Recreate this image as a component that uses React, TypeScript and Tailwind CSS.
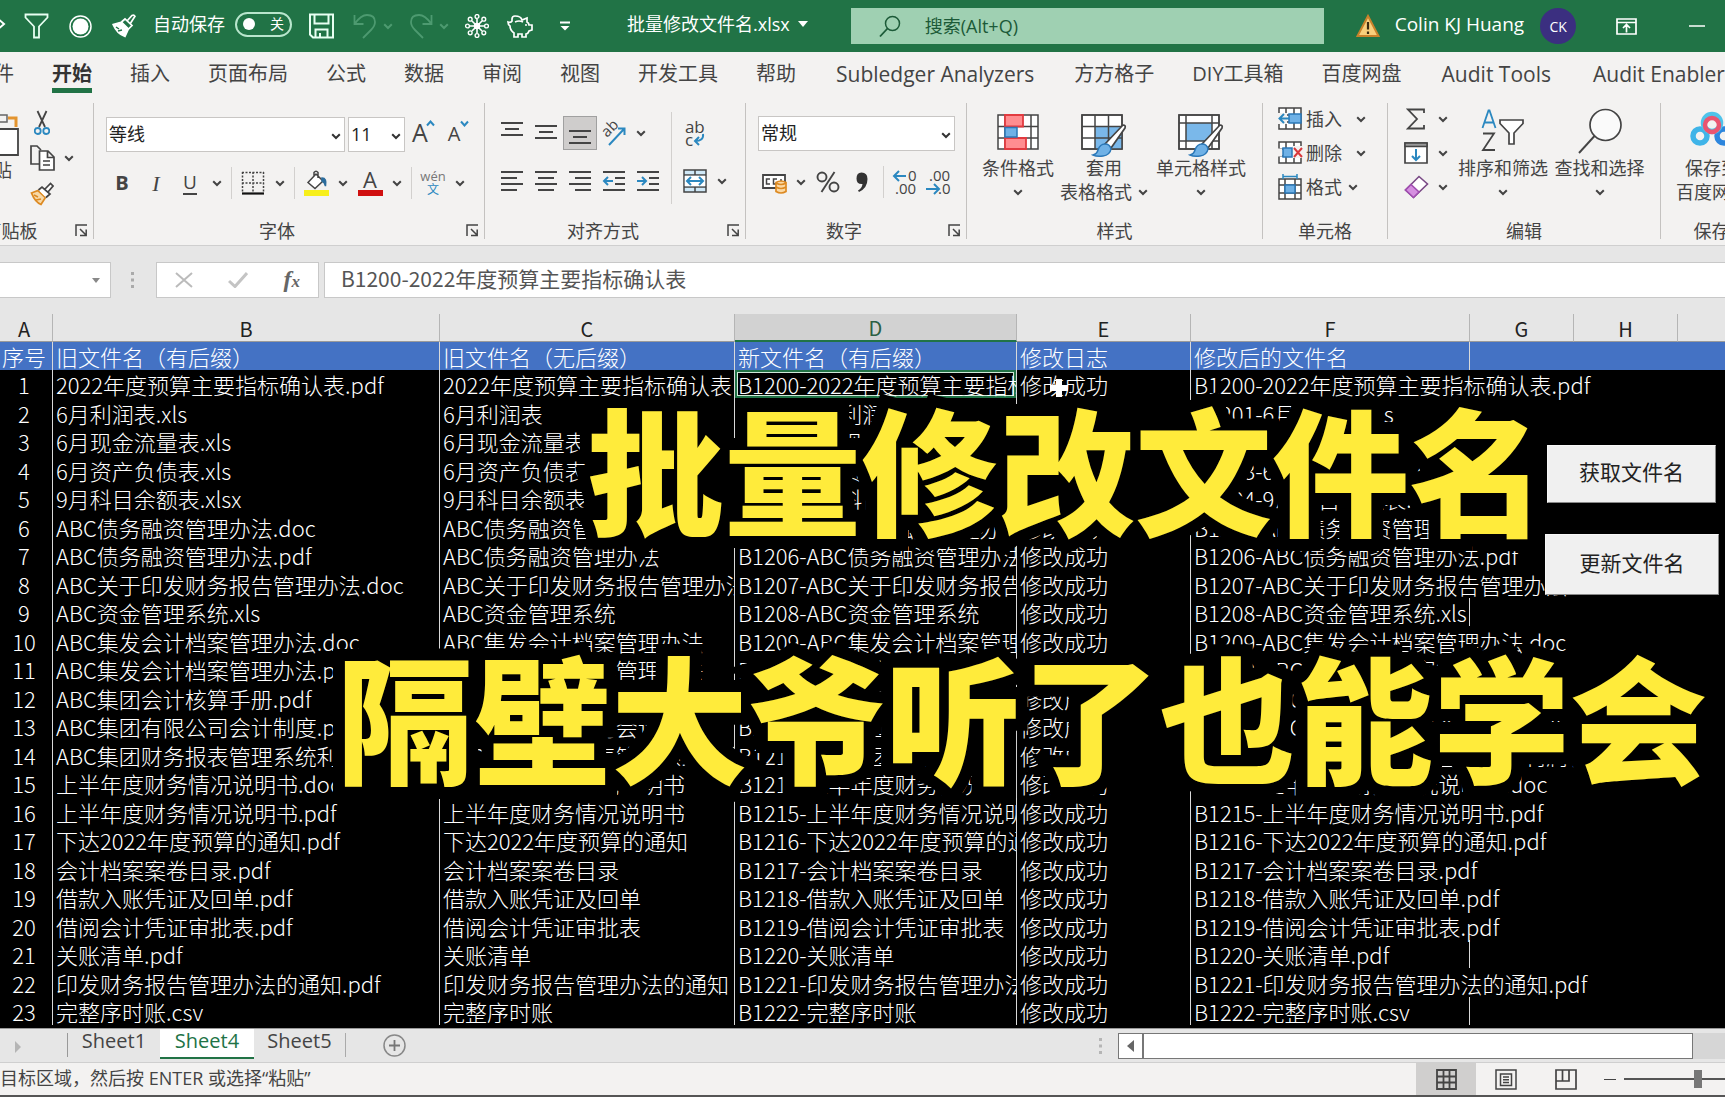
import React, { ReactNode } from "react";

const UI_FONT = "font-['Open_Sans','Noto_Sans_CJK_SC',sans-serif]";
const CELL_FONT = "font-['Noto_Sans_CJK_SC',sans-serif]";

type FileRow = { name: string; ext: string; spills?: boolean };

const FILES: FileRow[] = [
  { name: "2022年度预算主要指标确认表", ext: ".pdf", spills: true },
  { name: "6月利润表", ext: ".xls" },
  { name: "6月现金流量表", ext: ".xls" },
  { name: "6月资产负债表", ext: ".xls" },
  { name: "9月科目余额表", ext: ".xlsx" },
  { name: "ABC债务融资管理办法", ext: ".doc", spills: true },
  { name: "ABC债务融资管理办法", ext: ".pdf", spills: true },
  { name: "ABC关于印发财务报告管理办法", ext: ".doc", spills: true },
  { name: "ABC资金管理系统", ext: ".xls" },
  { name: "ABC集发会计档案管理办法", ext: ".doc", spills: true },
  { name: "ABC集发会计档案管理办法", ext: ".pdf", spills: true },
  { name: "ABC集团会计核算手册", ext: ".pdf", spills: true },
  { name: "ABC集团有限公司会计制度", ext: ".pdf", spills: true },
  { name: "ABC集团财务报表管理系统利润表", ext: ".xls", spills: true },
  { name: "上半年度财务情况说明书", ext: ".doc", spills: true },
  { name: "上半年度财务情况说明书", ext: ".pdf", spills: true },
  { name: "下达2022年度预算的通知", ext: ".pdf", spills: true },
  { name: "会计档案案卷目录", ext: ".pdf", spills: true },
  { name: "借款入账凭证及回单", ext: ".pdf", spills: true },
  { name: "借阅会计凭证审批表", ext: ".pdf", spills: true },
  { name: "关账清单", ext: ".pdf" },
  { name: "印发财务报告管理办法的通知", ext: ".pdf", spills: true },
  { name: "完整序时账", ext: ".csv" },
];

/* ---------- shared bits ---------- */

function Svg({ w = 24, h = 24, box, children, className = "" }: { w?: number; h?: number; box?: string; children: ReactNode; className?: string }) {
  return (
    <svg width={w} height={h} viewBox={box ?? `0 0 ${w} ${h}`} fill="none" stroke="#444" strokeWidth="1.5" className={`shrink-0 ${className}`} aria-hidden="true">
      {children}
    </svg>
  );
}

function Chevron({ className = "" }: { className?: string }) {
  return (
    <Svg w={10} h={7} className={className}>
      <path d="M1.2 1.2 5 5l3.8-3.8" strokeWidth="2" stroke="currentColor" />
    </Svg>
  );
}

function Tool({ label, children, active = false }: { label: string; children: ReactNode; active?: boolean }) {
  return (
    <button
      type="button"
      aria-label={label}
      className={`flex h-[34px] w-[34px] shrink-0 items-center justify-center ${active ? "border border-[#a0a0a0] bg-[#cfcdcc]" : ""}`}
    >
      {children}
    </button>
  );
}

function Drop({ label }: { label: string }) {
  return (
    <button type="button" aria-label={label} className="flex h-[34px] w-5 shrink-0 items-center justify-center text-[#444]">
      <Chevron />
    </button>
  );
}

function Rule() {
  return <span className="mx-1 h-8 w-px shrink-0 bg-[#d2d0ce]" />;
}

function Group({ label, width, launcher = false, children }: { label: string; width: string; launcher?: boolean; children: ReactNode }) {
  return (
    <section aria-label={label} className={`flex shrink-0 flex-col ${width}`}>
      <div className="flex flex-1">
        <div className="flex min-w-0 flex-1 flex-col">
          <div className="h-[114px]">{children}</div>
          <div className="flex h-[29px] items-center">
            <span className="flex-1 text-center text-[18px] leading-6">{label}</span>
            {launcher && (
              <button type="button" aria-label={`${label}设置`} className="flex w-6 justify-center">
                <Svg w={13} h={13}>
                  <path d="M1 12V1h11M5 5l6 6M11.2 5.500v6H5" />
                </Svg>
              </button>
            )}
          </div>
        </div>
        <span className="mt-px mb-1.5 w-px bg-[#c4c2c0]" />
      </div>
    </section>
  );
}

function BigButton({ lines, width, drop = "below", children }: { lines: string[]; width: string; drop?: "below" | "inline" | "none"; children: ReactNode }) {
  return (
    <button type="button" className={`flex shrink-0 flex-col items-center text-[18px] leading-6 ${width}`}>
      <span className="flex h-[54px] items-center">{children}</span>
      {lines.map((line, i) => (
        <span key={line} className="flex items-center gap-1.5 whitespace-nowrap">
          {line}
          {drop === "inline" && i === lines.length - 1 && <Chevron />}
        </span>
      ))}
      {drop === "below" && (
        <span className="flex h-6 items-center">
          <Chevron />
        </span>
      )}
    </button>
  );
}

/* ---------- title bar ---------- */

function TitleBar() {
  return (
    <header className="flex h-[52px] shrink-0 items-center overflow-hidden bg-[#217346] pb-1 text-[18px] whitespace-nowrap text-white">
      <Svg w={6} h={16} className="mr-[18px]">
        <path d="M-4 1 4 8l-8 7" stroke="#fff" strokeWidth="2" />
      </Svg>
      <button type="button" aria-label="筛选" className="mt-1 mr-5">
        <Svg w={25} h={26}>
          <path d="M1.500 1.500h22v3L15 13.500v11H10v-11L1.500 4.500z" stroke="#e8fff2" strokeWidth="1.800" />
        </Svg>
      </button>
      <button type="button" aria-label="录制" className="mt-1 mr-5">
        <Svg w={23} h={23}>
          <circle cx="11.500" cy="11.500" r="10.500" stroke="#fff" />
          <circle cx="11.500" cy="11.500" r="8" fill="#fff" stroke="none" />
        </Svg>
      </button>
      <button type="button" aria-label="格式刷" className="mt-1 mr-[17px]">
        <Svg w={24} h={24}>
          <path d="M1 10.500 9.500 8l7 7L13 22.500Q5 20 1 10.500z" fill="#fff" stroke="#fff" />
          <path d="M9.500 8 13 5l7 6.500-3.500 3.500M15 7l5-5.500q2-1 3 .8L18 10" stroke="#fff" strokeWidth="1.700" />
          <path d="m4 13 3 2m-1 2 4-1" stroke="#217346" />
        </Svg>
      </button>
      <label className="mr-[17px] flex items-center gap-2.5">
        <span>自动保存</span>
        <input type="checkbox" className="sr-only" />
        <span className="flex h-[25px] w-[57px] items-center justify-between rounded-full border-2 border-[#b9e6cd] px-1.5 text-[14px] leading-5">
          <span className="h-3 w-3 rounded-full bg-white" />
          关
        </span>
      </label>
      <button type="button" aria-label="保存" className="mt-1 mr-[19px]">
        <Svg w={25} h={26}>
          <path d="M1 1.500h23v23H4l-3-3zM5.500 1.500v9h14v-9M6.500 24.500v-8h12v8M11 20v4" stroke="#e8fff2" strokeWidth="2" />
        </Svg>
      </button>
      <button type="button" aria-label="撤消" className="mt-1 flex items-center gap-1.5 text-[#4d9a70]">
        <Svg w={24} h={26}>
          <path d="M1.500 2v9h9M2 10.500Q8 2 14 2q8 0 8 7 0 4-4 8l-8 8" stroke="currentColor" strokeWidth="1.800" />
        </Svg>
        <Chevron className="mr-4" />
      </button>
      <button type="button" aria-label="恢复" className="mt-1 flex items-center gap-1.5 text-[#4d9a70]">
        <Svg w={24} h={26}>
          <path d="M22.500 2v9h-9M22 10.500Q16 2 10 2 2 2 2 9q0 4 4 8l8 8" stroke="currentColor" strokeWidth="1.800" />
        </Svg>
        <Chevron className="mr-4" />
      </button>
      <button type="button" aria-label="雪花" className="mt-1 mr-[18px]">
        <Svg w={24} h={24}>
          <g stroke="#fff">
            <path d="M12 5v14M5 12h14M7 7l10 10M17 7 7 17" strokeWidth="1.600" />
            <circle cx="12" cy="12" r="2.500" fill="#fff" />
            {[[12, 2.500], [12, 21.500], [2.500, 12], [21.500, 12], [5.200, 5.200], [18.800, 5.200], [5.200, 18.800], [18.800, 18.800]].map(([x, y]) => (
              <circle key={`${x}-${y}`} cx={x} cy={y} r="1.900" strokeWidth="1.400" />
            ))}
          </g>
        </Svg>
      </button>
      <button type="button" aria-label="存钱罐" className="mt-1 mr-[26px]">
        <Svg w={26} h={24}>
          <path d="M5 5q0-3 3-3 6 0 7 4l5-2v4q2 1 2 3h3v5l-3 1q-1 3-3 3v3h-4v-3h-4v3H7v-4q-4-3-4-7Q1 11 1 8q3 1 4-1z" stroke="#fff" strokeWidth="1.700" />
          <path d="M8 8q4-2 8 0" stroke="#fff" />
          <circle cx="19" cy="11" r="1" fill="#fff" stroke="none" />
        </Svg>
      </button>
      <button type="button" aria-label="自定义快速访问工具栏" className="mt-1 mr-14">
        <Svg w={12} h={12}>
          <path d="M1 2.500h10" stroke="#fff" strokeWidth="2" />
          <path d="m1.500 6 4.500 4.500L10.500 6z" fill="#fff" stroke="none" />
        </Svg>
      </button>
      <button type="button" className="mr-[43px] flex items-center gap-2">
        批量修改文件名.xlsx
        <Svg w={10} h={6}>
          <path d="M0 0h10L5 6z" fill="#fff" stroke="none" />
        </Svg>
      </button>
      <label className="mt-1 flex h-9 w-[473px] shrink-0 items-center gap-6 bg-[#9fd0b2] pl-7">
        <Svg w={22} h={23}>
          <circle cx="13.500" cy="8.500" r="7" stroke="#1c5a38" />
          <path d="M8.500 13.500 1 21.500" stroke="#1c5a38" strokeWidth="1.800" />
        </Svg>
        <input type="search" aria-label="搜索" placeholder="搜索(Alt+Q)" className="min-w-0 flex-1 bg-transparent text-[18px] text-[#1c5a38] outline-none placeholder:text-[#1c5a38]" />
      </label>
      <Svg w={24} h={24} className="mt-1 mr-[15px] ml-8">
        <path d="M12 2 22.500 22h-21z" fill="#f8cf7c" stroke="#c9822b" strokeWidth="2" />
        <path d="M12 8v7.500M12 17.500v2.500" stroke="#3a2a10" strokeWidth="2.200" />
      </Svg>
      <span className="mr-4 text-[19px]">Colin KJ Huang</span>
      <button type="button" aria-label="账户" className="mt-1 mr-10 flex h-9 w-9 shrink-0 items-center justify-center rounded-full bg-[#3b2f80] text-[14px]">
        CK
      </button>
      <button type="button" aria-label="功能区显示选项" className="mt-1 mr-[52px]">
        <Svg w={21} h={17}>
          <path d="M1 1h19v15H1zM1 4.500h19M10.500 14.500V7M7 10l3.500-3.500L14 10" stroke="#fff" strokeWidth="1.700" />
        </Svg>
      </button>
      <button type="button" aria-label="最小化" className="mt-1">
        <Svg w={16} h={4}>
          <path d="M0 2h16" stroke="#fff" />
        </Svg>
      </button>
    </header>
  );
}

/* ---------- ribbon tabs ---------- */

const TABS = ["文件", "开始", "插入", "页面布局", "公式", "数据", "审阅", "视图", "开发工具", "帮助", "Subledger Analyzers", "方方格子", "DIY工具箱", "百度网盘", "Audit Tools", "Audit Enablers"];

function RibbonTabs() {
  return (
    <nav className="h-[50px] shrink-0 overflow-hidden bg-[#f3f2f1]">
      <div className="-ml-[26px] flex gap-[38px] text-[20px] leading-7 whitespace-nowrap text-[#444]">
        {TABS.map((t) => (
          <button
            key={t}
            type="button"
            className={`mt-2 border-b-[5px] ${t === "开始" ? "border-[#217346] font-bold text-[#333]" : "border-transparent"} ${/^(Sub|Audit)/.test(t) ? "px-0.5 text-[21px]" : ""}`}
          >
            {t}
          </button>
        ))}
      </div>
    </nav>
  );
}

/* ---------- ribbon groups ---------- */

function Lines({ rows }: { rows: [number, number, number][] }) {
  return (
    <Svg w={24} h={24}>
      <path d={rows.map(([x1, x2, y]) => `M${x1} ${y}H${x2}`).join("")} strokeWidth="2" />
    </Svg>
  );
}

function Combo({ label, value, width }: { label: string; value: string; width: string }) {
  return (
    <span className={`relative flex h-[35px] shrink-0 ${width}`}>
      <select aria-label={label} className="w-full appearance-none border border-[#c8c6c4] bg-white pl-0.5 text-[18px] text-[#222]">
        <option>{value}</option>
      </select>
      <Chevron className="pointer-events-none absolute top-4 right-1 text-[#333]" />
    </span>
  );
}

function ClipboardGroup() {
  return (
    <Group label="剪贴板" width="w-[142px] -ml-12" launcher>
      <div className="flex pl-6">
        <button type="button" className="w-11 self-start text-left text-[18px] leading-6">
          <span className="flex h-14 items-center justify-end">
            <Svg w={44} h={44} className="mt-2">
              <path d="M6 6h12M32 6h8v9" stroke="#e3942f" strokeWidth="3" />
              <path d="M18 3h13v7H18z" fill="#f3f2f1" stroke="#666" />
              <path d="M16 17h26v26H16z" fill="#fff" strokeWidth="1.800" />
            </Svg>
          </span>
          粘贴
        </button>
        <div className="flex flex-col pl-2.5">
          <button type="button" aria-label="剪切" className="flex h-[38px] w-6 items-center justify-center pt-1">
            <Svg w={16} h={26}>
              <path d="M3.500 1 11 17M12.500 1 5 17" strokeWidth="1.800" />
              <circle cx="3.700" cy="21" r="3" stroke="#2b88c0" strokeWidth="1.800" />
              <circle cx="12.300" cy="21" r="3" stroke="#2b88c0" strokeWidth="1.800" />
            </Svg>
          </button>
          <div className="flex h-9 items-center">
            <button type="button" aria-label="复制" className="mr-1">
              <Svg w={25} h={26}>
                <path d="M9 19H1V1h6l4 4" strokeWidth="1.700" />
                <path d="M9.500 6h8.500l6 6v13H9.500zM17.500 6v6.500H24M13 16h7M13 20h7" strokeWidth="1.700" fill="#fff" />
              </Svg>
            </button>
            <Drop label="复制选项" />
          </div>
          <button type="button" aria-label="格式刷" className="flex h-9 w-6 items-center">
            <Svg w={24} h={24}>
              <path d="M1.500 11 8 8.500l7.500 7L11 22.500Q5 20 1.500 11z" fill="#f7d9a8" stroke="#dd8a22" strokeWidth="1.800" />
              <path d="m4 13 4 2m-2 3 5-1" stroke="#dd8a22" />
              <path d="m8.500 8 3.500-3 8 7-4 3.500M15 7l5.500-5.500L23 4l-5 6" fill="#fff" strokeWidth="1.700" />
            </Svg>
          </button>
        </div>
      </div>
    </Group>
  );
}

function FontGroup() {
  return (
    <Group label="字体" width="w-[391px]" launcher>
      <div className="flex items-center gap-[3px] pt-3.5 pl-3">
        <Combo label="字体" value="等线" width="w-[239px]" />
        <Combo label="字号" value="11" width="w-[57px]" />
        <button type="button" aria-label="增大字号" className="ml-1 flex items-start pb-1">
          <span className="text-[25px] leading-8">A</span>
          <Svg w={9} h={7} className="mt-1 -ml-0.5">
            <path d="m1 5.500 3.500-4L8 5.500" stroke="#2b88c0" strokeWidth="2" />
          </Svg>
        </button>
        <button type="button" aria-label="减小字号" className="ml-2.5 flex items-start">
          <span className="text-[20px] leading-7">A</span>
          <Svg w={9} h={7}>
            <path d="m1 1.500 3.500 4L8 1.500" stroke="#2b88c0" strokeWidth="2" />
          </Svg>
        </button>
      </div>
      <div className="flex items-center pt-3.5 pl-[11px]">
        <Tool label="加粗"><span className="text-[20px] font-bold">B</span></Tool>
        <Tool label="倾斜"><span className="font-['Liberation_Serif',serif] text-[22px] italic">I</span></Tool>
        <Tool label="下划线"><span className="border-b-2 border-[#444] text-[19px] leading-[22px]">U</span></Tool>
        <Drop label="下划线选项" />
        <Rule />
        <Tool label="边框">
          <Svg w={24} h={24}>
            <path d="M1 1.500h22M1 12h22M1.500 1v21M12 1v21M22.500 1v21" strokeDasharray="2 1.500" />
            <path d="M1 22.500h22" stroke="#111" strokeWidth="2.200" />
          </Svg>
        </Tool>
        <Drop label="边框选项" />
        <Rule />
        <Tool label="填充颜色">
          <Svg w={25} h={26}>
            <path d="M4 12.500 12 4l7 7-8 7.500zM10 6V2.500Q12 0 14 2.500V8" fill="#fff" />
            <path d="M18 8q5 0 3.500 8-1-4-3.500-5z" fill="#2b6c9c" stroke="#2b6c9c" />
            <path d="M0 20h25v6H0z" fill="#f7ef1b" stroke="none" />
          </Svg>
        </Tool>
        <Drop label="填充颜色选项" />
        <Tool label="字体颜色">
          <span className="flex h-[26px] w-[25px] flex-col items-center justify-end border-b-[6px] border-[#d01010] text-[22px] leading-[22px]">A</span>
        </Tool>
        <Drop label="字体颜色选项" />
        <Rule />
        <Tool label="拼音">
          <span className="flex flex-col items-center text-[13px] leading-[13px] text-[#777]">
            wén<span className="text-[12px] text-[#2b88c0]">文</span>
          </span>
        </Tool>
        <Drop label="拼音选项" />
      </div>
    </Group>
  );
}

function AlignGroup() {
  return (
    <Group label="对齐方式" width="w-[261px]" launcher>
      <div className="flex pl-2.5">
        <div>
          <div className="flex pt-3.5">
            <Tool label="顶端对齐"><Lines rows={[[1, 23, 2], [5, 19, 8], [1, 23, 14]]} /></Tool>
            <Tool label="垂直居中"><Lines rows={[[1, 23, 5], [5, 19, 11], [1, 23, 17]]} /></Tool>
            <Tool label="底端对齐" active><Lines rows={[[1, 23, 10], [5, 19, 16], [1, 23, 22]]} /></Tool>
            <Tool label="方向">
              <Svg w={26} h={26}>
                <path d="m8 25 15-16M17 8.500h6.500V15" stroke="#2b88c0" strokeWidth="2" />
                <text x="0" y="0" transform="translate(6 18) rotate(-45)" fontSize="15" fill="#444" stroke="none">ab</text>
              </Svg>
            </Tool>
            <Drop label="方向选项" />
          </div>
          <div className="flex pt-3.5">
            <Tool label="左对齐"><Lines rows={[[1, 23, 3], [1, 17, 9], [1, 23, 15], [1, 17, 21]]} /></Tool>
            <Tool label="居中"><Lines rows={[[1, 23, 3], [4, 20, 9], [1, 23, 15], [4, 20, 21]]} /></Tool>
            <Tool label="右对齐"><Lines rows={[[1, 23, 3], [7, 23, 9], [1, 23, 15], [7, 23, 21]]} /></Tool>
            <Tool label="减少缩进量">
              <Svg>
                <path d="M1 3h22M13 9h10M13 15h10M1 21h22" strokeWidth="2" />
                <path d="M11 12H2m4-4-4 4 4 4" stroke="#2b88c0" strokeWidth="2" />
              </Svg>
            </Tool>
            <Tool label="增加缩进量">
              <Svg>
                <path d="M1 3h22M13 9h10M13 15h10M1 21h22" strokeWidth="2" />
                <path d="M1 12h9M6 8l4 4-4 4" stroke="#2b88c0" strokeWidth="2" />
              </Svg>
            </Tool>
          </div>
        </div>
        <span className="mx-1.5 mt-2.5 h-[92px] w-px bg-[#d2d0ce]" />
        <div>
          <div className="flex pt-3.5">
            <Tool label="自动换行">
              <span className="text-left text-[17px] leading-[13px]">
                ab
                <span className="flex items-center">
                  c
                  <Svg w={12} h={14}>
                    <path d="M10 1q1 7-8 7m4-4L2 8l4 4" stroke="#2b88c0" strokeWidth="2" />
                  </Svg>
                </span>
              </span>
            </Tool>
          </div>
          <div className="flex pt-3.5">
            <Tool label="合并后居中">
              <Svg>
                <path d="M1 1h22v22H1z" fill="#cfe8f7" />
                <path d="M1 6h22M1 18h22M12 1v5M12 18v5" />
                <path d="M1.800 6.800h20.400v10.400H1.800z" fill="#fff" stroke="none" />
                <path d="M4 12h16M8 8l-4 4 4 4M16 8l4 4-4 4" stroke="#2b88c0" strokeWidth="2" />
              </Svg>
            </Tool>
            <Drop label="合并选项" />
          </div>
        </div>
      </div>
    </Group>
  );
}

function DecimalIcon({ increase }: { increase: boolean }) {
  return (
    <Svg w={26} h={26}>
      <g fontSize="15" fill="#444" stroke="none">
        <text x={increase ? 16 : 3} y="12">{increase ? "0" : ".00"}</text>
        <text x={increase ? 3 : 12} y="25">{increase ? ".00" : ".0"}</text>
      </g>
      {increase ? <path d="M14 7H2m5-5L2 7l5 5" stroke="#2b88c0" strokeWidth="2" /> : <path d="M0 20h12M8 15l5 5-5 5" stroke="#2b88c0" strokeWidth="2" />}
    </Svg>
  );
}

function NumberGroup() {
  return (
    <Group label="数字" width="w-[221px]" launcher>
      <div className="pt-3.5 pl-3">
        <Combo label="数字格式" value="常规" width="w-[197px]" />
      </div>
      <div className="flex items-center pt-3.5 pl-[11px]">
        <Tool label="会计数字格式">
          <Svg w={25} h={24}>
            <path d="M1 5h22v13H1z" fill="#fff" strokeWidth="1.800" />
            <path d="M8 9H4.500v5H8M15 9h-3.500v5H15M19 9v3" />
            <path d="M14 12.500q5-3 10 0v9q-5 3-10 0z" fill="#fbd9a5" stroke="#dd8a22" strokeWidth="1.700" />
            <path d="M14 13q5 3 10 0M14 17q5 3 10 0" stroke="#dd8a22" />
          </Svg>
        </Tool>
        <Drop label="会计数字格式选项" />
        <Tool label="百分比样式">
          <Svg w={24} h={24}>
            <circle cx="6" cy="7" r="4.500" strokeWidth="1.900" />
            <circle cx="18" cy="17" r="4.500" strokeWidth="1.900" />
            <path d="M18.500 2 5.500 22" strokeWidth="1.900" />
          </Svg>
        </Tool>
        <Tool label="千位分隔样式">
          <Svg w={12} h={20}>
            <path d="M5.500.5q6 0 6 6.500 0 9-8.500 13l-1-1.500q4-2.500 4.500-6.500Q.5 12.500.5 6.500.5.5 5.500.5z" fill="#333" stroke="none" />
          </Svg>
        </Tool>
        <Rule />
        <Tool label="增加小数位数"><DecimalIcon increase /></Tool>
        <Tool label="减少小数位数"><DecimalIcon increase={false} /></Tool>
      </div>
    </Group>
  );
}

function BrushOverlay() {
  return (
    <>
      <path d="M42 11q3 0 2 3L30 34l-6-4z" fill="#fff" strokeWidth="1.700" />
      <path d="M24 30q5 0 6 5-1 6-8 7-6 1-10-1 4-1 5-5 2-6 7-6z" fill="#6fb1e6" stroke="#2b78b8" />
    </>
  );
}

function StylesGroup() {
  return (
    <Group label="样式" width="w-[296px]">
      <div className="flex pl-2">
        <BigButton lines={["条件格式"]} width="w-[86px]">
          <Svg w={42} h={36} className="mt-1.5">
            <path d="M1 1h40v34H1z" fill="#fff" />
            <path d="M8 1v34M34 1v34M1 12.500h40M1 24h40" />
            <path d="M8 1h18v11.500H8zM8 24h21v11H8z" fill="#ff8d90" stroke="#e23b40" strokeWidth="1.800" />
            <path d="M8 13.500h12V23H8z" fill="#6fb1e6" stroke="#2b78b8" />
          </Svg>
        </BigButton>
        <BigButton lines={["套用", "表格格式"]} width="w-[86px]" drop="inline">
          <Svg w={46} h={44} className="mt-3.5">
            <path d="M1 1h40v34H1z" fill="#fff" />
            <path d="M14 12.500h27V35H14z" fill="#7ab8ea" stroke="none" />
            <path d="M1 1h40v34H1zM14 1v34M27.500 1v34M1 12.500h40M1 24h40" />
            <BrushOverlay />
          </Svg>
        </BigButton>
        <BigButton lines={["单元格样式"]} width="w-[100px] ml-1">
          <Svg w={46} h={44} className="mt-3.5">
            <path d="M1 1h40v34H1z" fill="#fff" />
            <path d="M8 9h26v18H8z" fill="#7ab8ea" stroke="none" />
            <path d="M1 1h40v34H1zM8 1v34M34 1v34M1 9h40M1 27h40" />
            <BrushOverlay />
          </Svg>
        </BigButton>
      </div>
    </Group>
  );
}

function CellsGroup() {
  const base = <path d="M1 1h22v21H1zM8 1v21M16 1v21M1 8h22M1 15h22" fill="#fff" />;
  return (
    <Group label="单元格" width="w-[125px]">
      <div className="pl-[15px] text-[18px]">
        <button type="button" className="flex h-[34px] items-center whitespace-nowrap">
          <Svg w={25} h={24}>
            {base}
            <path d="M11 7h12v9H11z" fill="#6fb1e6" stroke="#2b78b8" />
            <path d="M0 6h9v11H0z" fill="#f3f2f1" stroke="none" />
            <path d="M11 11.500H1.500M6 7l-4.500 4.500L6 16" stroke="#2b88c0" strokeWidth="2" />
          </Svg>
          <span className="mr-3.5 ml-[3px]">插入</span>
          <Chevron />
        </button>
        <button type="button" className="flex h-[34px] items-center whitespace-nowrap">
          <Svg w={25} h={24}>
            {base}
            <path d="M0 7.500h4v8H0zM14 5h11v12H14z" fill="#f3f2f1" stroke="none" />
            <path d="M5 7h9v9H5z" fill="#6fb1e6" stroke="#2b78b8" />
            <path d="m16 7 8 9M24 7l-8 9" stroke="#d9383c" strokeWidth="2" />
          </Svg>
          <span className="mr-3.5 ml-[3px]">删除</span>
          <Chevron />
        </button>
        <button type="button" className="flex h-[34px] items-center whitespace-nowrap">
          <Svg w={25} h={26}>
            <path d="M1 5h22v20H1zM7 5v20M17 5v20M1 11h22M1 19h22" fill="#fff" />
            <path d="M7 11h10v8H7z" fill="#6fb1e6" stroke="#2b78b8" />
            <path d="M5 2.500h14M5 0v5M19 0v5" stroke="#2b88c0" />
          </Svg>
          <span className="mr-1.5 ml-[3px]">格式</span>
          <Chevron />
        </button>
      </div>
    </Group>
  );
}

function EditGroup() {
  return (
    <Group label="编辑" width="w-[273px]">
      <div className="flex pl-[11px]">
        <div>
          <div className="flex">
            <Tool label="自动求和">
              <Svg w={20} h={22}>
                <path d="M18 5V1.500H2L11 11l-9 9.500h16V17" strokeWidth="1.800" />
              </Svg>
            </Tool>
            <Drop label="求和选项" />
          </div>
          <div className="flex">
            <Tool label="填充">
              <Svg w={25} h={22}>
                <path d="M1 1h22v20H1z" fill="#fff" strokeWidth="1.700" />
                <path d="M1 1h22v3.500H1z" fill="#999" />
                <path d="M12 7v11m-4-4 4 4 4-4" stroke="#2b88c0" strokeWidth="2" />
              </Svg>
            </Tool>
            <Drop label="填充选项" />
          </div>
          <div className="flex">
            <Tool label="清除">
              <Svg w={25} h={24}>
                <path d="M15 1.500 23.500 9 9.500 22.500 1.500 15z" fill="#fff" stroke="#7a4a86" strokeWidth="1.600" />
                <path d="m7 9.500 8 7.500-5.500 5.500-8-7.500z" fill="#d58fe0" stroke="#a04db0" strokeWidth="1.600" />
              </Svg>
            </Tool>
            <Drop label="清除选项" />
          </div>
        </div>
        <BigButton lines={["排序和筛选"]} width="w-[96px] ml-0.5">
          <Svg w={44} h={46} className="mt-1">
            <path d="m1.500 20 6-17.500h1l6 17.500M4 14.500h8" stroke="#2b88c0" strokeWidth="1.800" />
            <path d="M2 25.500h11L2 42h12" strokeWidth="1.800" />
            <path d="M19 12h23v3.500L33 25v11h-5V25l-9-9.500z" fill="#fff" strokeWidth="1.700" />
          </Svg>
        </BigButton>
        <BigButton lines={["查找和选择"]} width="w-[97px]">
          <Svg w={44} h={46} className="mt-1">
            <circle cx="27.500" cy="17" r="15.500" fill="#fafafa" strokeWidth="1.700" />
            <path d="M16.500 28 1 45" strokeWidth="1.900" />
          </Svg>
        </BigButton>
      </div>
    </Group>
  );
}

function BaiduGroup() {
  return (
    <Group label="保存" width="w-[102px]">
      <div className="flex">
        <BigButton lines={["保存到", "百度网盘"]} width="w-[102px]" drop="none">
          <Svg w={44} h={36}>
            <circle cx="10" cy="25" r="7" stroke="#3fb4e8" strokeWidth="5.500" />
            <circle cx="34" cy="25" r="7" stroke="#2d86dd" strokeWidth="5.500" />
            <circle cx="22" cy="12" r="8.500" stroke="#4fc3ea" strokeWidth="5.500" />
            <circle cx="22" cy="14" r="7" stroke="#ea5470" strokeWidth="4.500" />
          </Svg>
        </BigButton>
      </div>
    </Group>
  );
}

/* ---------- formula bar ---------- */

function FormulaBar() {
  return (
    <div className="flex h-9 shrink-0 items-stretch">
      <button type="button" aria-label="名称框" className="flex w-[111px] shrink-0 items-center justify-end border border-l-0 border-[#c8c8c8] bg-white pr-2.5">
        <Svg w={8} h={5}>
          <path d="M0 0h8L4 5z" fill="#888" stroke="none" />
        </Svg>
      </button>
      <Svg w={45} h={36}>
        <path d="M21.500 10v16" stroke="#aaa" strokeWidth="3" strokeDasharray="3 3.500" />
      </Svg>
      <div className="flex w-[163px] shrink-0 items-center justify-between border border-[#c8c8c8] bg-white px-[18px]">
        <button type="button" aria-label="取消">
          <Svg w={18} h={16}>
            <path d="m1 1 16 14M17 1 1 15" stroke="#bbb" strokeWidth="2" />
          </Svg>
        </button>
        <button type="button" aria-label="输入">
          <Svg w={20} h={16}>
            <path d="m1 9 6 5.500L19 1" stroke="#c4c4c4" strokeWidth="3" />
          </Svg>
        </button>
        <button type="button" aria-label="插入函数" className="font-['Liberation_Serif',serif] text-[24px] leading-7 font-bold text-[#666] italic">
          f<span className="text-[17px]">x</span>
        </button>
      </div>
      <input
        aria-label="编辑栏"
        defaultValue="B1200-2022年度预算主要指标确认表"
        className={`ml-[5px] min-w-0 flex-1 border border-r-0 border-[#c8c8c8] bg-white pb-0.5 pl-4 text-[21px] text-[#555] outline-none ${CELL_FONT}`}
      />
    </div>
  );
}

/* ---------- sheet ---------- */

const COLUMNS = ["A", "B", "C", "D", "E", "F", "G", "H", ""];
const TITLES = ["序号", "旧文件名（有后缀）", "旧文件名（无后缀）", "新文件名（有后缀）", "修改日志", "修改后的文件名", "", "", ""];

function Sheet() {
  const line = "border-r border-[#d9d9d9]";
  return (
    <main className={`relative min-h-0 flex-1 overflow-hidden border-b border-[#999] ${CELL_FONT}`}>
      <div className="h-full overflow-hidden bg-[#e6e6e6] pt-4">
        <div className="h-full bg-black">
          <table className="w-full table-fixed border-separate border-spacing-0 text-[22px] leading-7 font-light whitespace-nowrap text-white">
            <colgroup>
              <col className="w-[53px]" />
              <col className="w-[387px]" />
              <col className="w-[295px]" />
              <col className="w-[282px]" />
              <col className="w-[174px]" />
              <col className="w-[279px]" />
              <col className="w-[104px]" />
              <col className="w-[104px]" />
              <col />
            </colgroup>
            <thead>
              <tr className="h-7 text-[20px] text-[#222]">
                {COLUMNS.map((c, i) => (
                  <th
                    key={i}
                    scope="col"
                    className={`overflow-hidden border-r p-0 pt-0.5 leading-6 font-normal ${i === 0 ? "pr-1" : ""} ${i === 8 ? "border-r-0" : "border-r-[#b5b5b5]"} ${c === "D" ? "border-b-2 border-b-[#217346] bg-[#d2d2d2] text-[#2c5f43]" : "border-b border-b-[#9a9a9a] bg-[#e6e6e6]"}`}
                  >
                    {c}
                  </th>
                ))}
              </tr>
            </thead>
            <tbody>
              <tr className="h-7 bg-[#4472c4]">
                {TITLES.map((t, i) => (
                  <td key={i} className={`overflow-hidden p-0 ${i === 0 ? "pr-1 text-center" : "pl-[3px]"} ${i < 6 ? line : ""}`}>
                    {t}
                  </td>
                ))}
              </tr>
              {FILES.map((f, i) => {
                const renamed = `B${1200 + i}-${f.name}`;
                return (
                  <tr key={i} className="h-7 odd:h-[29px]">
                    <td className={`p-0 pr-1 text-center ${line}`}>{i + 1}</td>
                    <td className={`overflow-hidden p-0 pl-[3px] ${line}`}>{f.name + f.ext}</td>
                    <td className={`overflow-hidden p-0 pl-[3px] ${line}`}>{f.name}</td>
                    <td className={`overflow-hidden p-0 pl-[3px] ${i === 0 ? "shadow-[inset_0_0_0_2px_#217346,inset_0_0_0_3px_#cfe8d8]" : ""} ${line}`}>{renamed}</td>
                    <td className={`overflow-hidden p-0 pl-[3px] ${line}`}>修改成功</td>
                    <td className={`p-0 pl-[3px] ${f.spills ? "" : line}`}>
                      <span className="block w-0">{renamed + f.ext}</span>
                    </td>
                    <td className="p-0" />
                    <td className="p-0" />
                    <td className="p-0" />
                  </tr>
                );
              })}
            </tbody>
          </table>
        </div>
      </div>

      <Svg w={18} h={18} className="absolute top-[81px] left-[1050px]">
        <path d="M9 0v18M0 9h18" stroke="#fff" strokeWidth="6" />
      </Svg>

      <button type="button" className="absolute top-[147px] left-[1547px] h-[58px] w-[169px] border border-[#f8f8f8] border-r-[#888] border-b-[#888] bg-[#f0f0f0] pb-1 text-[21px] text-[#222]">
        获取文件名
      </button>
      <button type="button" className="absolute top-[236px] left-[1545px] h-[61px] w-[174px] border border-[#f8f8f8] border-r-[#888] border-b-[#888] bg-[#f0f0f0] pb-1 text-[21px] text-[#222]">
        更新文件名
      </button>

      <h1 className="pointer-events-none text-[137px] leading-[140px] font-black whitespace-nowrap text-[#ffeb3b] [-webkit-text-stroke:24px_#000] [paint-order:stroke_fill]">
        <span className="absolute top-[98px] left-[587px]">批量修改文件名</span>
        <span className="absolute top-[346px] left-[337px]">隔壁大爷听了也能学会</span>
      </h1>
    </main>
  );
}

/* ---------- bottom bars ---------- */

function SheetTabs() {
  return (
    <div className="flex h-[34px] shrink-0 items-start overflow-hidden border-b border-[#cfcfcf] bg-[#e6e6e6] text-[20px] leading-6 text-[#444]">
      <button type="button" aria-label="下一个工作表" className="mt-3 mr-[46px] ml-[15px]">
        <Svg w={6} h={12}>
          <path d="M0 0v12l6-6z" fill="#b5b5b5" stroke="none" />
        </Svg>
      </button>
      <span className="mt-1 h-6 w-px bg-[#999]" />
      <button type="button" className="w-[92px] text-center">Sheet1</button>
      <button type="button" className="flex h-[30px] w-[94px] items-start justify-center border-b-2 border-[#217346] bg-white text-[#217346]">Sheet4</button>
      <button type="button" className="w-[91px] text-center">Sheet5</button>
      <span className="mt-1 h-6 w-px bg-[#aaa]" />
      <button type="button" aria-label="新工作表" className="mt-[5px] ml-[37px]">
        <Svg w={23} h={23}>
          <circle cx="11.500" cy="11.500" r="10.500" stroke="#888" />
          <path d="M11.500 6v11M6 11.500h11" stroke="#777" strokeWidth="1.800" />
        </Svg>
      </button>
      <Svg w={19} h={34} className="ml-auto">
        <path d="M1.500 9v17" stroke="#b5b5b5" strokeWidth="3" strokeDasharray="3 3.500" />
      </Svg>
      <div className="mt-1 flex h-[26px] w-[575px] border border-[#777] bg-white">
        <button type="button" aria-label="向左滚动" className="flex w-[25px] items-center justify-center border-r-2 border-[#777]">
          <Svg w={7} h={12}>
            <path d="M7 0v12L0 6z" fill="#666" stroke="none" />
          </Svg>
        </button>
      </div>
      <span className="mt-1 h-[26px] w-8 bg-[#d6d6d6]" />
    </div>
  );
}

function StatusBar() {
  return (
    <footer className="flex h-[34px] shrink-0 items-stretch overflow-hidden border-b-2 border-[#555] bg-[#f3f2f1] text-[18px] text-[#444]">
      <p className="mr-auto self-center pb-0.5 leading-7 whitespace-nowrap">目标区域，然后按 ENTER 或选择“粘贴”</p>
      <button type="button" aria-label="普通" className="flex w-[60px] items-center justify-center bg-[#d0cfce]">
        <Svg w={21} h={21}>
          <path d="M1 1h19v19H1zM7.500 1v19M13.500 1v19M1 7.500h19M1 13.500h19" strokeWidth="1.800" />
        </Svg>
      </button>
      <button type="button" aria-label="页面布局" className="flex w-[60px] items-center justify-center">
        <Svg w={22} h={21}>
          <path d="M1 1h20v19H1zM5.500 5h11v11.500h-11zM8 8h6M8 10.800h6M8 13.500h6" />
        </Svg>
      </button>
      <button type="button" aria-label="分页预览" className="flex w-[60px] items-center justify-center">
        <Svg w={22} h={21}>
          <path d="M1 1h20v19H1zM1 12h13V1M7.500 1v11" strokeWidth="1.700" />
        </Svg>
      </button>
      <button type="button" aria-label="缩小" className="mr-2 ml-2 flex w-3 items-center">
        <span className="h-px w-3 bg-[#444]" />
      </button>
      <div className="flex w-[101px] items-center overflow-hidden">
        <input
          type="range"
          aria-label="显示比例"
          defaultValue={50}
          className="h-[18px] w-[148px] shrink-0 appearance-none bg-[linear-gradient(#555,#555)] bg-[length:100%_2px] bg-center bg-no-repeat [&::-webkit-slider-thumb]:h-[18px] [&::-webkit-slider-thumb]:w-2 [&::-webkit-slider-thumb]:appearance-none [&::-webkit-slider-thumb]:bg-[#777]"
        />
      </div>
    </footer>
  );
}

export default function App() {
  return (
    <div className={`flex h-screen min-h-[720px] flex-col overflow-hidden bg-[#e6e6e6] text-[#444] ${UI_FONT}`}>
      <TitleBar />
      <RibbonTabs />
      <div className="mb-4 flex shrink-0 overflow-hidden border-b border-[#cfcfcf] bg-[#f3f2f1]">
        <ClipboardGroup />
        <FontGroup />
        <AlignGroup />
        <NumberGroup />
        <StylesGroup />
        <CellsGroup />
        <EditGroup />
        <BaiduGroup />
      </div>
      <FormulaBar />
      <Sheet />
      <SheetTabs />
      <StatusBar />
    </div>
  );
}
